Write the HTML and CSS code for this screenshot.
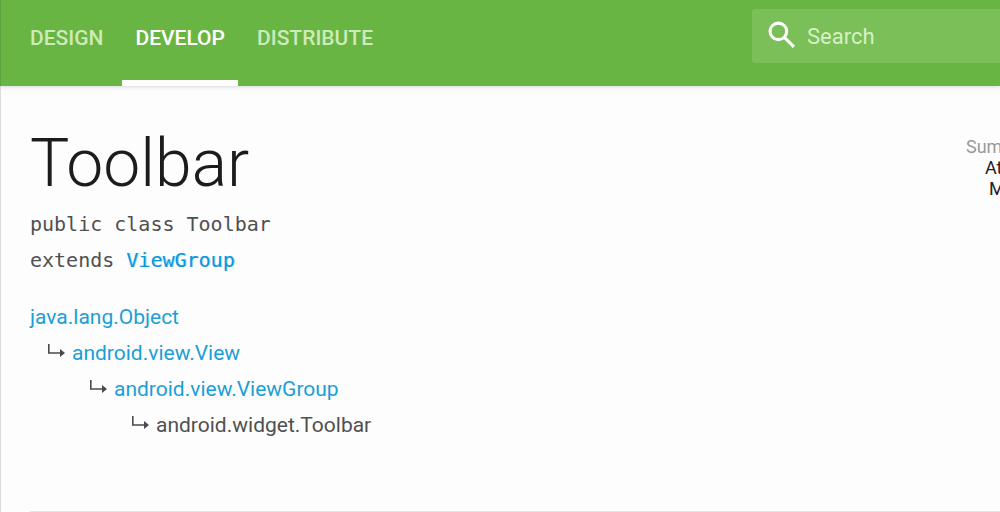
FILE: index.html
```html
<!DOCTYPE html>
<html lang="en">
<head>
<meta charset="utf-8">
<title>Toolbar</title>
<link rel="stylesheet" href="styles.css">
</head>
<body>
<header class="topbar">
  <nav class="tabs">
    <a class="tab" href="#design">DESIGN</a>
    <a class="tab tab-active" href="#develop" aria-current="page">DEVELOP</a>
    <a class="tab" href="#distribute">DISTRIBUTE</a>
  </nav>
  <label class="search">
    <svg class="search-icon" viewBox="0 0 27 27" aria-hidden="true"><circle cx="10" cy="10" r="8"/><path d="M16 16l9 9"/></svg>
    <input class="search-input" type="text" placeholder="Search" aria-label="Search">
  </label>
</header>
<main class="content">
  <div class="intro">
    <div class="details">
      <h1 class="title">Toolbar</h1>
      <div class="signature">public class Toolbar<br>extends <a class="signature-link" href="#viewgroup">ViewGroup</a></div>
      <ul class="tree">
        <li class="node"><a class="link" href="#object">java.lang.Object</a></li>
        <li class="node level-1"><svg class="arrow" viewBox="0 0 17 14" aria-hidden="true"><path class="arrow-line" d="M.8 0V9H14"/><path d="M12 5l5 4-5 4z"/></svg><a class="link" href="#view">android.view.View</a></li>
        <li class="node level-2"><svg class="arrow" viewBox="0 0 17 14" aria-hidden="true"><path class="arrow-line" d="M.8 0V9H14"/><path d="M12 5l5 4-5 4z"/></svg><a class="link" href="#viewgroup">android.view.ViewGroup</a></li>
        <li class="node level-3"><svg class="arrow" viewBox="0 0 17 14" aria-hidden="true"><path class="arrow-line" d="M.8 0V9H14"/><path d="M12 5l5 4-5 4z"/></svg><span>android.widget.Toolbar</span></li>
      </ul>
    </div>
    <aside class="summary">
      <div class="summary-label">Sum</div>
      <div class="summary-row row-attrs">At</div>
      <div class="summary-row row-methods">M</div>
    </aside>
  </div>
</main>
</body>
</html>
```
FILE: styles.css
```css
* { box-sizing: border-box; }

body {
  margin: 0;
  min-height: 100vh;
  overflow: hidden;
  background: #fdfdfd;
  color: #505050;
  font: 21px/36px Roboto, sans-serif;
  box-shadow: inset 1px 0 #dcdce0;
}

a { text-decoration: none; }

.topbar {
  display: flex;
  justify-content: space-between;
  padding-left: 17px;
  background: #69b543;
  box-shadow: inset 1px 0 #5fa33f, 0 1px 4px rgba(0, 0, 0, 0.15);
}

.tabs { display: flex; gap: 6px; }

.tab {
  padding: 20px 13px 24px;
  border-bottom: 6px solid transparent;
  color: #cdebb9;
  font-weight: 500;
}

.tab-active {
  border-color: #fff;
  color: #fff;
}

.search {
  display: flex;
  align-items: center;
  gap: 11px;
  width: 248px;
  height: 54px;
  margin-top: 9px;
  padding-left: 16px;
  border-radius: 4px 0 0 4px;
  background: #7abf57;
}

.search-icon {
  flex: none;
  width: 28px;
  height: 28px;
  margin-bottom: 2px;
  fill: none;
  stroke: #fff;
  stroke-width: 3;
}

.search-input {
  min-width: 0;
  flex: 1;
  padding: 2px 0 0;
  border: 0;
  outline: 0;
  background: none;
  color: #fff;
  font: 22px/36px Roboto, sans-serif;
}

.search-input::placeholder { color: #d8f0c8; opacity: 1; }

.content { padding-left: 30px; }

.intro {
  display: flex;
  justify-content: space-between;
  padding: 40px 0 68px;
  border-bottom: 2px solid #e4e4e6;
}

.title {
  margin: 0;
  padding-bottom: 4px;
  color: #1d1b1e;
  font-size: 66px;
  font-weight: 300;
  line-height: 76px;
}

.signature {
  font-family: "DejaVu Sans Mono", monospace;
  font-size: 20px;
}

.signature-link {
  color: #0a98dc;
  text-shadow: 1px 0 rgba(10, 152, 220, 0.4);
}

.tree {
  margin: 21px 0 0;
  padding: 0;
  list-style: none;
}

.node { display: flex; align-items: center; }

.link { color: #1a9fd6; }

.level-1 { padding-left: 18px; }
.level-2 { padding-left: 60px; }
.level-3 { padding-left: 102px; }

.arrow {
  width: 17px;
  height: 14px;
  margin: 0 7px 4px 0;
  fill: #4a4a4a;
}

.arrow-line { fill: none; stroke: #4a4a4a; stroke-width: 1.600; }

.summary {
  width: 34px;
  padding-top: 10px;
  overflow: hidden;
  color: #222;
  font-size: 18px;
  line-height: 21px;
}

.summary-label { color: #999; }
.row-attrs { padding-left: 19px; }
.row-methods { padding-left: 23px; }
```
